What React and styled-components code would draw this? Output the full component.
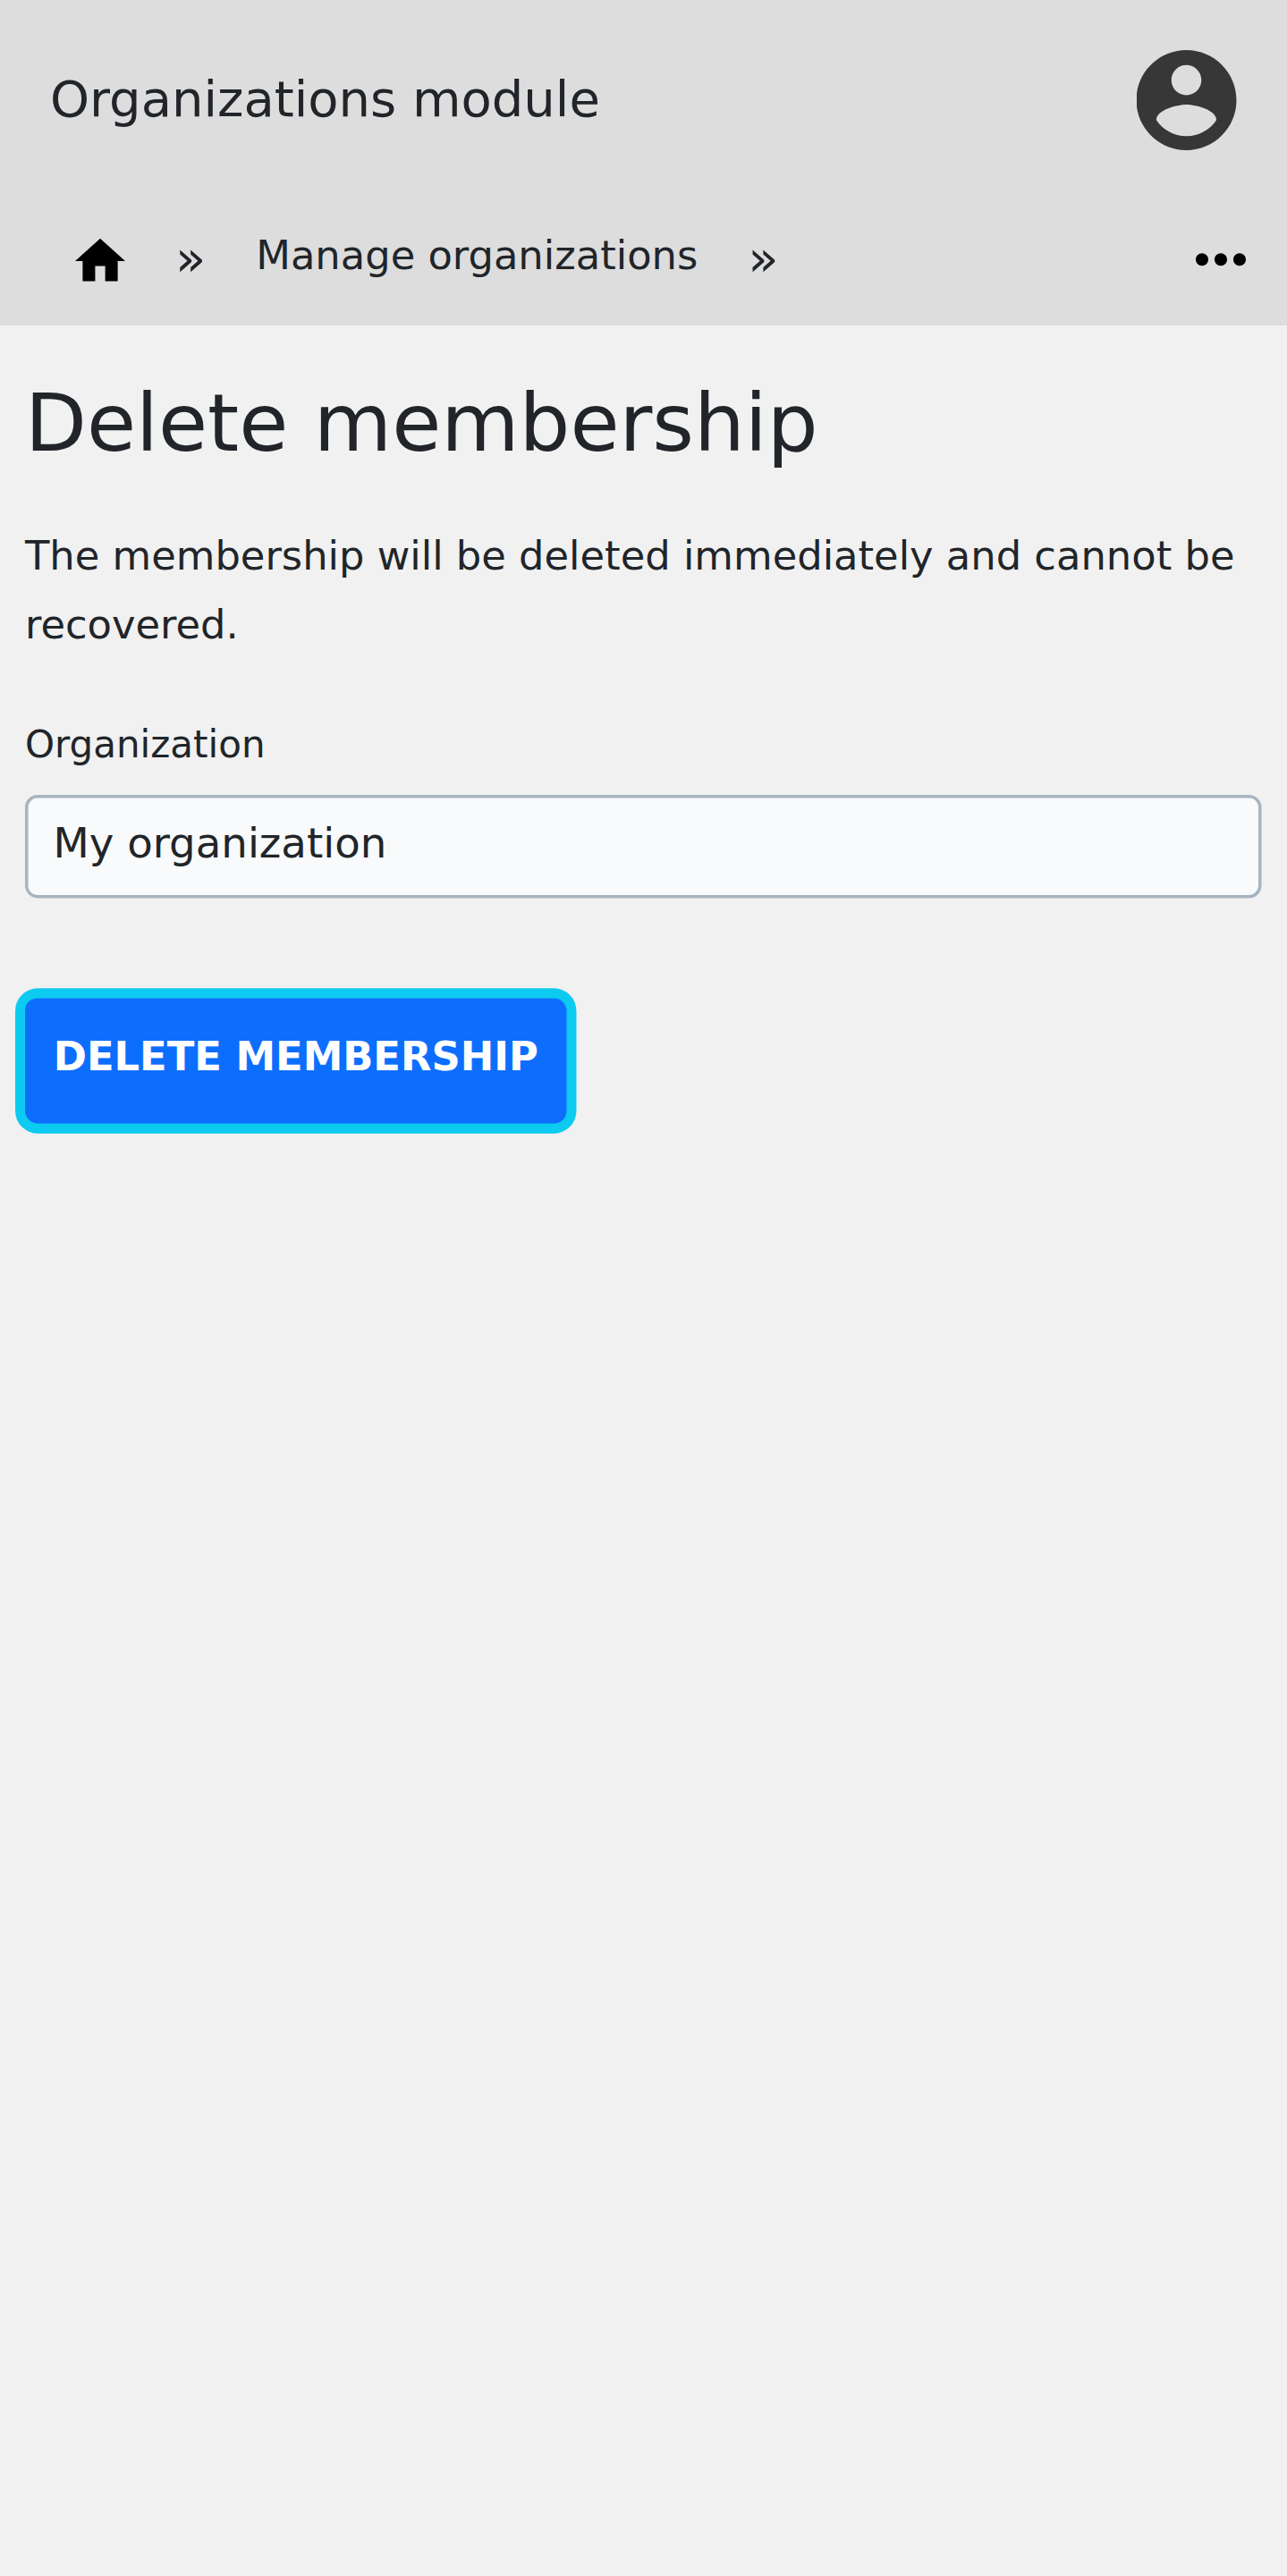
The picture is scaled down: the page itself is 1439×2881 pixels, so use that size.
import React from "react";
import styled, { createGlobalStyle } from "styled-components";

const GlobalStyle = createGlobalStyle`
  *, *::before, *::after { box-sizing: border-box; }
  body {
    margin: 0;
    background: #f1f1f1;
    color: #212529;
    font-family: "DejaVu Sans", sans-serif;
    font-size: 44.8px;
    line-height: 77px;
  }
  #root { min-height: 2881px; }
`;

const Header = styled.header`
  width: 1438.5px;
  background: #ddd;
`;

const TitleBar = styled.div`
  display: flex;
  align-items: center;
  justify-content: space-between;
  height: 224px;
  padding: 0 56px;
`;

const ModuleTitle = styled.div`
  font-size: 56px;
  line-height: 83px;
  padding-bottom: 3px;
`;

const AccountIcon = styled.svg`
  display: block;
  width: 112px;
  height: 112px;
  fill: #373737;
`;

const Breadcrumbs = styled.nav`
  display: flex;
  align-items: flex-start;
  height: 140px;
  padding: 23px 31.5px 0 84px;
`;

const HomeIcon = styled.svg`
  display: block;
  flex: none;
  width: 56px;
  height: 56px;
  margin-top: 17px;
`;

const Separator = styled.span`
  font-size: 56px;
  line-height: 77px;
  margin: 3px 56px 0;
`;

const Crumb = styled.a`
  color: inherit;
  white-space: nowrap;
`;

const MoreButton = styled.button`
  display: block;
  width: 84px;
  height: 84px;
  margin: 1px 0 0 auto;
  padding: 0;
  border: 0;
  background: none;
`;

const Main = styled.main`
  padding: 56px 28px 0;
`;

const Heading = styled.h1`
  margin: 0 0 57px;
  font-size: 89.6px;
  font-weight: 400;
  line-height: 106px;
`;

const Message = styled.p`
  margin: 0 0 60px;
`;

const Label = styled.label`
  display: block;
  margin-bottom: 21px;
  font-size: 42px;
  line-height: 71px;
`;

const Input = styled.input`
  display: block;
  width: 1382px;
  height: 115px;
  padding: 0 28.5px 7px;
  border: 3px solid #a7b4c0;
  border-radius: 14px;
  outline: none;
  background: #f8fafb;
  box-shadow: 0.5px 0.5px 0 #a7b4c0, inset 0.5px 0.5px 0 #a7b4c0;
  color: inherit;
  font-family: inherit;
  font-size: 46.667px;
`;

const SubmitButton = styled.button`
  display: block;
  width: 605px;
  height: 140px;
  margin-top: 112px;
  padding: 0 0 9px 0.5px;
  border: 0;
  border-radius: 14px;
  background: #0d6efd;
  box-shadow:
    0.5px 0.5px 0 #0d6efd,
    0.25px 0.5px 0 11.2px #0dcaf0,
    inset 0 0.5px 0 #0dcaf0;
  color: #fff;
  font-family: inherit;
  font-size: 44.8px;
  font-weight: 700;
  text-transform: uppercase;
  white-space: nowrap;
`;

export default function App() {
  return (
    <>
      <GlobalStyle />
      <Header>
        <TitleBar>
          <ModuleTitle>Organizations module</ModuleTitle>
          <AccountIcon viewBox="2.09 2 20 20">
            <path d="M12 2C6.48 2 2 6.48 2 12s4.48 10 10 10 10-4.48 10-10S17.52 2 12 2zm0 3c1.66 0 3 1.34 3 3s-1.34 3-3 3-3-1.34-3-3 1.34-3 3-3zm0 14.2c-2.5 0-4.71-1.28-6-3.22.03-1.99 4-3.08 6-3.08 1.99 0 5.97 1.09 6 3.08-1.29 1.94-3.5 3.22-6 3.22z" />
          </AccountIcon>
        </TitleBar>
        <Breadcrumbs aria-label="Breadcrumb">
          <HomeIcon viewBox="2 2 20 20">
            <path d="M10 20v-6h4v6h5v-8h3L12 3 2 12h3v8z" />
          </HomeIcon>
          <Separator>»</Separator>
          <Crumb>Manage organizations</Crumb>
          <Separator>»</Separator>
          <MoreButton aria-label="More">
            <svg width="84" height="84" viewBox="0 -0.1 24 24" display="block">
              <path d="M6 10c-1.1 0-2 .9-2 2s.9 2 2 2 2-.9 2-2-.9-2-2-2zm12 0c-1.1 0-2 .9-2 2s.9 2 2 2 2-.9 2-2-.9-2-2-2zm-6 0c-1.1 0-2 .9-2 2s.9 2 2 2 2-.9 2-2-.9-2-2-2z" />
            </svg>
          </MoreButton>
        </Breadcrumbs>
      </Header>
      <Main>
        <Heading>Delete membership</Heading>
        <Message>The membership will be deleted immediately and cannot be recovered.</Message>
        <Label htmlFor="organization">Organization</Label>
        <Input id="organization" defaultValue="My organization" readOnly />
        <SubmitButton>Delete membership</SubmitButton>
      </Main>
    </>
  );
}
